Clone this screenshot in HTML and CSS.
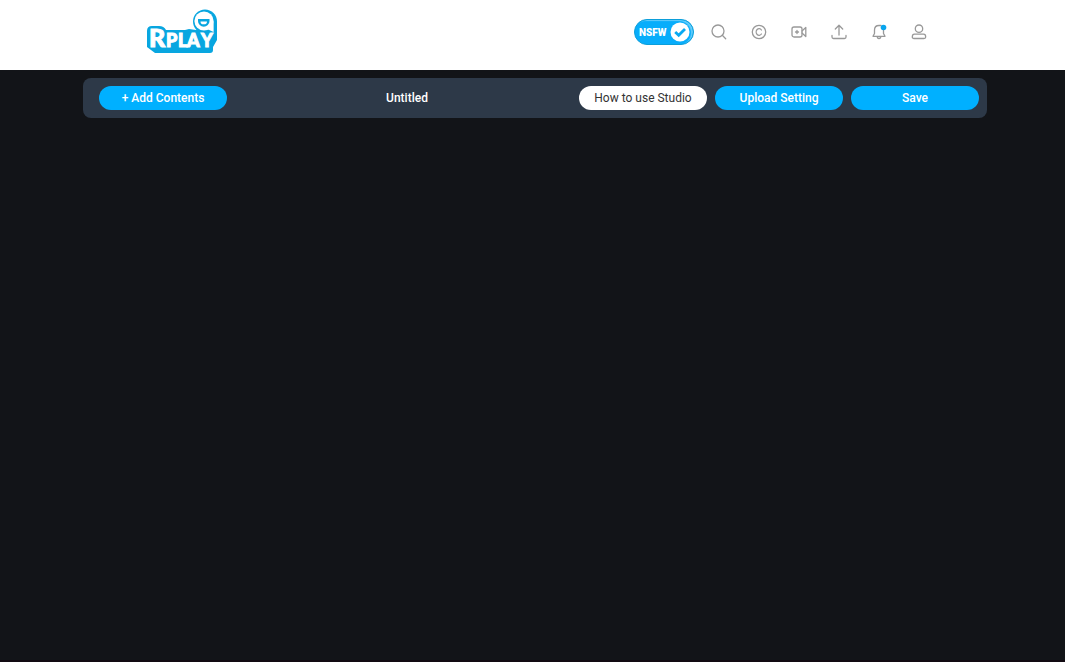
FILE: index.html
```html
<!DOCTYPE html>
<html lang="en">
<head>
<meta charset="utf-8">
<meta name="viewport" content="width=device-width, initial-scale=1">
<title>RPLAY Studio</title>
<link rel="stylesheet" href="styles.css">
</head>
<body>
<header class="header">
  <a class="logo" href="#" aria-label="RPLAY home">
    <svg width="72" height="46" viewBox="0 0 72 46">
      <path class="logo-body" d="M1 23Q1 18 6 18H13Q18 18 20 22H39L43 21L50 22L71 13V32L67 39V42Q67 45 64 45H9L1 39Z"/>
      <circle class="logo-body" cx="59" cy="13.500" r="12"/>
      <circle class="logo-white" cx="58" cy="13" r="9.600"/>
      <path class="logo-white" d="M61 21L67.600 13V24Z"/>
      <path class="logo-mouth" d="M52 11H63.500V13A5.700 5.700 0 0 1 52 13Z"/>
      <path class="logo-white" d="M54.500 13.500H61A3.200 2.800 0 0 1 54.500 13.500Z"/>
      <text class="logo-text logo-text-big" x="3" y="39">R</text>
      <text class="logo-text" x="20" y="39">P</text>
      <text class="logo-text" x="32" y="39">L</text>
      <text class="logo-text" x="41" y="39">A</text>
      <text class="logo-text" x="55" y="39">Y</text>
    </svg>
  </a>
  <nav class="actions" aria-label="Main">
    <button class="nsfw" type="button" aria-pressed="true">
      <span>NSFW</span>
      <svg width="20" height="20" viewBox="0 0 20 20"><circle cx="10" cy="10" r="9.500" fill="#fff"/><path d="M5.200 10L8.700 13.200L15 7" fill="none" stroke="#08a9f2" stroke-width="2.800"/></svg>
    </button>
    <button class="icon" type="button" aria-label="Search"><svg viewBox="0 0 16 16"><circle cx="7" cy="7" r="6"/><path d="M11.300 11.300L14.700 14.700"/></svg></button>
    <button class="icon" type="button" aria-label="Coins"><svg viewBox="0 0 16 16"><circle cx="8" cy="8" r="6.700"/><path d="M10.400 6A2.900 3.300 0 1 0 10.400 10"/></svg></button>
    <button class="icon" type="button" aria-label="Go live"><svg viewBox="0 0 16 16"><rect x="1" y="3" width="10" height="10" rx="2"/><path d="M11 7L14.800 3.500V12.500L11 9M4.500 8H7.500M6 6.500V9.500"/></svg></button>
    <button class="icon" type="button" aria-label="Upload"><svg viewBox="0 0 16 16"><path d="M8 11V1.500M4.300 5L8 1.300L11.700 5M1 11.500V13Q1 14.500 2.500 14.500H13.500Q15 14.500 15 13V11.500"/></svg></button>
    <button class="icon" type="button" aria-label="Notifications"><svg viewBox="0 0 16 16"><path d="M10 1.500H8Q3.500 1.500 3.500 6V9.500L2 12.300H14L12.500 9.500V6M6.300 12.500Q6.300 14.500 8 14.500T9.700 12.500"/><circle class="dot" cx="12.500" cy="3.500" r="2.800"/></svg></button>
    <button class="icon" type="button" aria-label="Account"><svg viewBox="0 0 16 16"><circle cx="8" cy="4.700" r="3.700"/><path d="M3.500 10.200H12.500Q14.700 10.200 14.700 13Q14.700 14.500 13 14.500H3Q1.300 14.500 1.300 13Q1.300 10.200 3.500 10.200Z"/></svg></button>
  </nav>
</header>
<main class="studio">
  <div class="toolbar">
    <button class="pill" type="button">+ Add Contents</button>
    <h1 class="title">Untitled</h1>
    <div class="tools">
      <button class="pill pill-light" type="button">How to use Studio</button>
      <button class="pill" type="button">Upload Setting</button>
      <button class="pill" type="button">Save</button>
    </div>
  </div>
</main>
</body>
</html>
```
FILE: styles.css
```css
* {
  box-sizing: border-box;
}

body {
  display: flex;
  flex-direction: column;
  min-height: 100vh;
  margin: 0;
  background: #121418;
  font-family: Roboto, sans-serif;
  font-size: 12px;
}

button {
  padding: 0;
  border: 0;
  font: inherit;
  cursor: pointer;
}

.header {
  display: flex;
  justify-content: space-between;
  align-items: flex-start;
  height: 70px;
  padding: 8px 138px 0 146px;
  background: #fff;
}

.logo svg {
  display: block;
}

.logo-body,
.logo-mouth {
  fill: #08a6e0;
}

.logo-white {
  fill: #fff;
}

.logo-text {
  fill: #fff;
  stroke: #fff;
  stroke-width: 1;
  font: 900 18px Lato, sans-serif;
}

.logo-text-big {
  font-size: 25px;
}

.actions {
  display: flex;
  align-items: center;
  gap: 24px;
  padding-top: 11px;
}

.nsfw {
  display: flex;
  align-items: center;
  justify-content: space-between;
  width: 60px;
  height: 26px;
  margin-right: -7px;
  padding: 0 3px 0 4px;
  border: 1px solid #0c9fda;
  border-radius: 13px;
  background: #08adfb;
  box-shadow: inset -2px 1px 1px #65cdfb;
  color: #fff;
  font-size: 10px;
  font-weight: 900;
}

.icon {
  width: 16px;
  height: 16px;
  background: none;
}

.icon svg {
  display: block;
  width: 16px;
  height: 16px;
  fill: none;
  stroke: #999;
  stroke-width: 1.3;
  stroke-linecap: round;
  stroke-linejoin: round;
}

.icon .dot {
  fill: #08a5ee;
  stroke: none;
}

.studio {
  flex: 1;
  padding: 8px 78px 0 83px;
  border-bottom: 2px solid #120a12;
}

.toolbar {
  display: flex;
  align-items: center;
  height: 40px;
  padding: 0 8px 0 16px;
  border-radius: 8px;
  background: #2d3948;
}

.title {
  flex: 1;
  margin: 0 0 0 8px;
  color: #fff;
  font-size: 12px;
  font-weight: 500;
  text-align: center;
}

.tools {
  display: flex;
  gap: 8px;
}

.pill {
  width: 128px;
  height: 24px;
  border-radius: 12px;
  background: #00b0ff;
  color: #fff;
  font-weight: 500;
}

.pill-light {
  background: #fff;
  color: #333;
  font-weight: 400;
}
```
